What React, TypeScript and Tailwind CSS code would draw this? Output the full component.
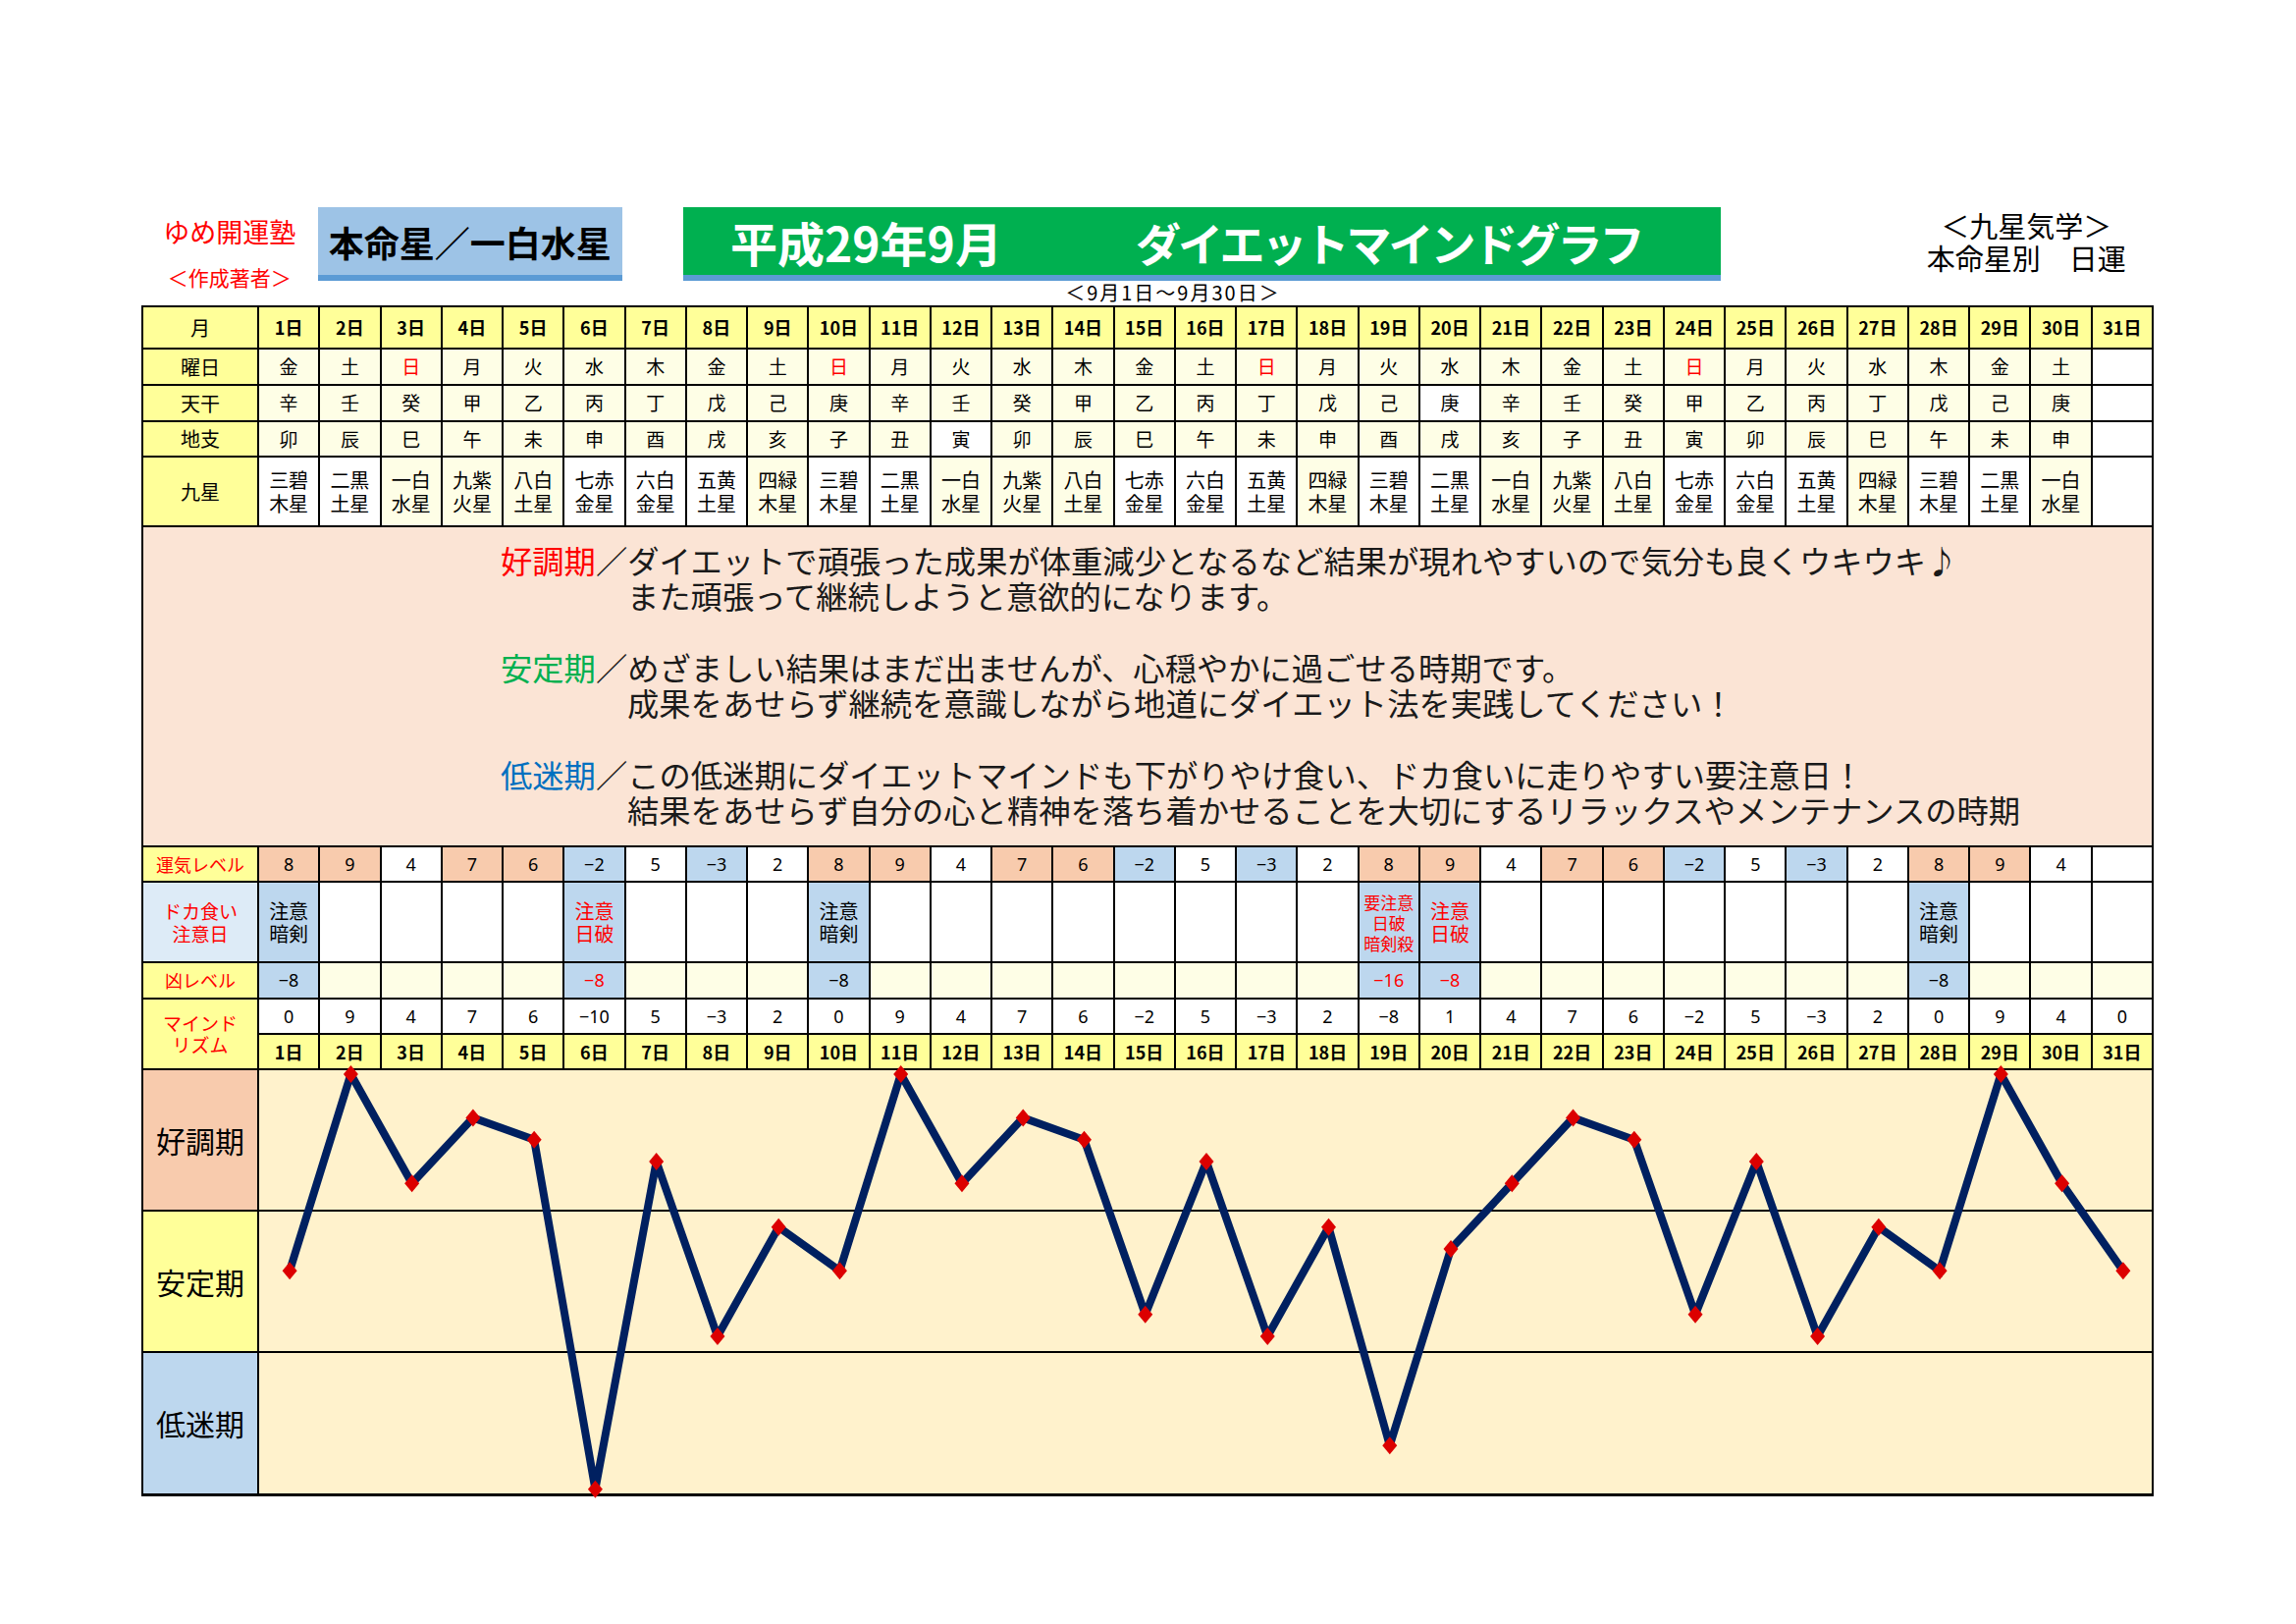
import React from 'react';

// 2017-09 daily data for 一白水星
const DAYS = Array.from({ length: 31 }, (_, i) => i + 1);
const WEEK = ['日', '月', '火', '水', '木', '金', '土'];
const KAN = ['甲', '乙', '丙', '丁', '戊', '己', '庚', '辛', '壬', '癸'];
const SHI = ['子', '丑', '寅', '卯', '辰', '巳', '午', '未', '申', '酉', '戌', '亥'];
const STAR = ['一白', '二黒', '三碧', '四緑', '五黄', '六白', '七赤', '八白', '九紫'];
const STAR_EL = ['水星', '土星', '木星', '木星', '土星', '金星', '金星', '土星', '火星'];
const UNKI_BASE = [8, 9, 4, 7, 6, -2, 5, -3, 2];
const MIND = [0, 9, 4, 7, 6, -10, 5, -3, 2, 0, 9, 4, 7, 6, -2, 5, -3, 2, -8, 1, 4, 7, 6, -2, 5, -3, 2, 0, 9, 4, 0];

const CAUTION: Record<number, { lines: string[]; red: boolean; kyo: number; small?: boolean }> = {
    1: { lines: ['注意', '暗剣'], red: false, kyo: -8 },
    6: { lines: ['注意', '日破'], red: true, kyo: -8 },
    10: { lines: ['注意', '暗剣'], red: false, kyo: -8 },
    19: { lines: ['要注意', '日破', '暗剣殺'], red: true, kyo: -16, small: true },
    20: { lines: ['注意', '日破'], red: true, kyo: -8 },
    28: { lines: ['注意', '暗剣'], red: false, kyo: -8 },
};

const fmt = (n: number) => (n < 0 ? `−${Math.abs(n)}` : `${n}`);
const starIdx = (d: number) => (((2 - (d - 1)) % 9) + 9) % 9;

const Cell: React.FC<{ className?: string; children?: React.ReactNode }> = ({ className = '', children }) => (
    <div className={`border-r-2 border-b-2 border-black flex flex-col items-center justify-center text-center ${className}`}>
        {children}
    </div>
);

// plot area: table 2050 - left border 2 - label 118
const PLOT_W = 1930;
const COL_W = PLOT_W / 31;
const py = (v: number) => 4 + (9 - v) * 22.25;

const MindChart: React.FC = () => {
    const pts = MIND.map((v, i) => [(i + 0.5) * COL_W, py(v)]);
    return (
        <svg className="absolute left-0 top-0 overflow-visible" width={PLOT_W} height={431}>
            <polyline
                points={pts.map(([x, y]) => `${x},${y}`).join(' ')}
                fill="none"
                stroke="#002060"
                strokeWidth={8}
                strokeLinejoin="miter"
                strokeMiterlimit={2}
            />
            {pts.map(([x, y], i) => (
                <polygon key={i} points={`${x},${y - 9} ${x + 7.5},${y} ${x},${y + 9} ${x - 7.5},${y}`} fill="#dc0000" />
            ))}
        </svg>
    );
};

export default function App() {
    return (
        <div className="w-[2339px] h-[1654px] bg-white text-black font-['Noto_Sans_CJK_JP','Noto_Sans',sans-serif] pt-[211px] pl-[144px]">
            {/* header */}
            <div className="w-[2050px] h-[100px] flex items-start">
                <div className="w-[180px] flex flex-col items-center text-[#ff0000]">
                    <div className="text-[27px] leading-[30px] mt-[10px]">ゆめ開運塾</div>
                    <div className="text-[21px] leading-[24px] mt-[19px]">＜作成著者＞</div>
                </div>
                <div className="w-[311px] h-[75px] bg-[#9dc3e6] border-b-[6px] border-[#5b9bd5] flex items-center justify-center">
                    <span className="text-[36px] font-bold leading-none">本命星／一白水星</span>
                </div>
                <div className="ml-[62px] w-[1059px]">
                    <div className="h-[75px] bg-[#00b050] border-b-[6px] border-[#5b9bd5] flex items-center text-white font-bold pl-[48px]">
                        <span className="text-[48px] leading-none">平成29年9月</span>
                        <span className="ml-[136px] text-[46px] leading-none tracking-[-3px]">ダイエットマインドグラフ</span>
                    </div>
                    <div className="ml-[384px] w-[230px] text-center text-[20px] leading-[20px] tracking-[2px] mt-[2px] whitespace-nowrap">＜9月1日〜9月30日＞</div>
                </div>
                <div className="ml-[182px] w-[260px] text-center text-[29px] leading-[33px] mt-[2px]">
                    <div>＜九星気学＞</div>
                    <div>本命星別　日運</div>
                </div>
            </div>

            {/* table */}
            <div className="grid w-[2050px] border-l-2 border-t-2 border-black grid-cols-[118px_repeat(31,minmax(0,1fr))] grid-rows-[43px_37px_37px_36px_71px_326px_36px_82px_37px_36px_36px_434px]">
                {/* 月 */}
                <Cell className="bg-[#ffff99] text-[20px]">月</Cell>
                {DAYS.map((d) => (
                    <Cell key={`h${d}`} className="bg-[#ffff99] text-[18px] font-bold">{d}日</Cell>
                ))}

                {/* 曜日 */}
                <Cell className="bg-[#ffff99] text-[20px]">曜日</Cell>
                {DAYS.map((d) => {
                    const w = d <= 30 ? WEEK[(d + 4) % 7] : '';
                    return (
                        <Cell key={`w${d}`} className={`text-[19px] ${d <= 30 ? 'bg-[#fefee6]' : 'bg-white'} ${w === '日' ? 'text-[#ff0000]' : ''}`}>{w}</Cell>
                    );
                })}

                {/* 天干 */}
                <Cell className="bg-[#ffff99] text-[20px]">天干</Cell>
                {DAYS.map((d) => (
                    <Cell key={`k${d}`} className={`text-[19px] ${d <= 30 && d !== 20 ? 'bg-[#fefee6]' : 'bg-white'}`}>{d <= 30 ? KAN[(d + 6) % 10] : ''}</Cell>
                ))}

                {/* 地支 */}
                <Cell className="bg-[#ffff99] text-[20px]">地支</Cell>
                {DAYS.map((d) => (
                    <Cell key={`s${d}`} className={`text-[19px] ${d <= 30 && d !== 12 ? 'bg-[#fefee6]' : 'bg-white'}`}>{d <= 30 ? SHI[(d + 2) % 12] : ''}</Cell>
                ))}

                {/* 九星 */}
                <Cell className="bg-[#ffff99] text-[20px]">九星</Cell>
                {DAYS.map((d) => {
                    if (d > 30) return <Cell key={`q${d}`} className="bg-white" />;
                    const s = starIdx(d);
                    const yellow = s === 0 || s === 3 || s === 7 || s === 8;
                    return (
                        <Cell key={`q${d}`} className={`text-[20px] leading-[24px] ${yellow ? 'bg-[#fefee6]' : 'bg-white'}`}>
                            <span>{STAR[s]}</span>
                            <span>{STAR_EL[s]}</span>
                        </Cell>
                    );
                })}

                {/* description */}
                <div className="col-span-full bg-[#fbe4d5] border-r-2 border-b-2 border-black pl-[364px] pt-[15px] text-[32.3px] leading-[36px] text-[#1a1a1a] whitespace-nowrap">
                    <p><span className="text-[#ff0000]">好調期</span>／ダイエットで頑張った成果が体重減少となるなど結果が現れやすいので気分も良くウキウキ♪</p>
                    <p className="pl-[129px]">また頑張って継続しようと意欲的になります。</p>
                    <p className="mt-[37px]"><span className="text-[#00b050]">安定期</span>／めざましい結果はまだ出ませんが、心穏やかに過ごせる時期です。</p>
                    <p className="pl-[129px]">成果をあせらず継続を意識しながら地道にダイエット法を実践してください！</p>
                    <p className="mt-[37px]"><span className="text-[#0070c0]">低迷期</span>／この低迷期にダイエットマインドも下がりやけ食い、ドカ食いに走りやすい要注意日！</p>
                    <p className="pl-[129px]">結果をあせらず自分の心と精神を落ち着かせることを大切にするリラックスやメンテナンスの時期</p>
                </div>

                {/* 運気レベル */}
                <Cell className="bg-[#ffff99] text-[18px] text-[#ff0000]">運気レベル</Cell>
                {DAYS.map((d) => {
                    if (d > 30) return <Cell key={`u${d}`} className="bg-white" />;
                    const v = UNKI_BASE[(d - 1) % 9];
                    const bg = v >= 6 ? 'bg-[#f8cbad]' : v < 0 ? 'bg-[#bdd7ee]' : 'bg-white';
                    return (
                        <Cell key={`u${d}`} className={`text-[18px] font-['Noto_Sans','Noto_Sans_CJK_JP',sans-serif] ${bg}`}>{fmt(v)}</Cell>
                    );
                })}

                {/* ドカ食い注意日 */}
                <Cell className="bg-[#ddebf7] text-[19px] leading-[23px] text-[#ff0000]">
                    <span>ドカ食い</span>
                    <span>注意日</span>
                </Cell>
                {DAYS.map((d) => {
                    const c = CAUTION[d];
                    if (!c) return <Cell key={`c${d}`} className="bg-white" />;
                    return (
                        <Cell key={`c${d}`} className={`bg-[#bdd7ee] ${c.red ? 'text-[#ff0000]' : 'text-black'} ${c.small ? 'text-[17px] leading-[21px]' : 'text-[20px] leading-[23px]'}`}>
                            {c.lines.map((l) => (
                                <span key={l}>{l}</span>
                            ))}
                        </Cell>
                    );
                })}

                {/* 凶レベル */}
                <Cell className="bg-[#ffff99] text-[18px] text-[#ff0000]">凶レベル</Cell>
                {DAYS.map((d) => {
                    const c = CAUTION[d];
                    if (!c) return <Cell key={`x${d}`} className="bg-[#fefee6]" />;
                    return (
                        <Cell key={`x${d}`} className={`bg-[#bdd7ee] text-[18px] font-['Noto_Sans','Noto_Sans_CJK_JP',sans-serif] ${c.red ? 'text-[#ff0000]' : 'text-black'}`}>{fmt(c.kyo)}</Cell>
                    );
                })}

                {/* マインドリズム */}
                <Cell className="row-span-2 bg-[#ffff99] text-[19px] leading-[22px] text-[#ff0000]">
                    <span>マインド</span>
                    <span>リズム</span>
                </Cell>
                {MIND.map((v, i) => (
                    <Cell key={`m${i}`} className="bg-white text-[18px] font-['Noto_Sans','Noto_Sans_CJK_JP',sans-serif]">{fmt(v)}</Cell>
                ))}
                {DAYS.map((d) => (
                    <Cell key={`d${d}`} className="bg-[#ffff99] text-[18px] font-bold">{d}日</Cell>
                ))}

                {/* chart */}
                <div className="border-r-2 border-b-[3px] border-black flex flex-col">
                    <div className="h-[144px] bg-[#f8cbad] border-b-2 border-black flex items-center justify-center text-[30px]">好調期</div>
                    <div className="h-[144px] bg-[#ffff99] border-b-2 border-black flex items-center justify-center text-[30px]">安定期</div>
                    <div className="flex-1 bg-[#bdd7ee] flex items-center justify-center text-[30px]">低迷期</div>
                </div>
                <div className="col-span-31 relative bg-[#fff2cc] border-r-2 border-b-[3px] border-black flex flex-col">
                    <div className="h-[144px] border-b-2 border-black" />
                    <div className="h-[144px] border-b-2 border-black" />
                    <div className="flex-1" />
                    <MindChart />
                </div>
            </div>
        </div>
    );
}
